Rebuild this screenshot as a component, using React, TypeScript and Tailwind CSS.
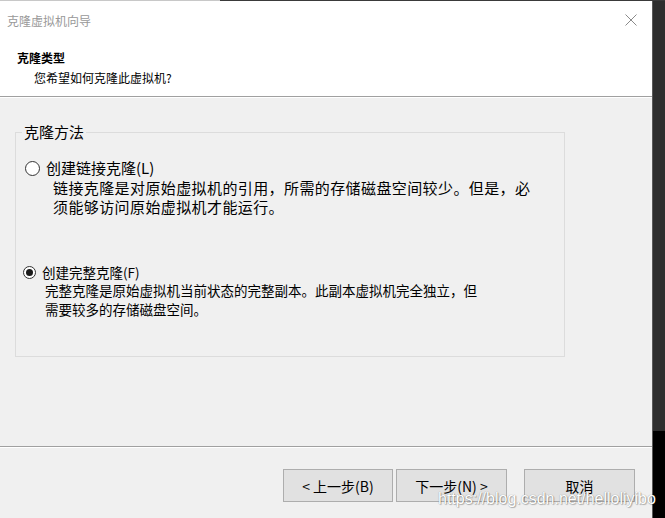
const cjk = "font-['Noto_Sans_CJK_SC','Microsoft_YaHei',sans-serif]";

function Radio({ checked, size }: { checked?: boolean; size: number }) {
  return (
    <span
      className="flex items-center justify-center rounded-full border border-[#333333] bg-white shrink-0"
      style={{ width: size, height: size }}
    >
      {checked && <span className="block w-[7px] h-[7px] rounded-full bg-[#1a1a1a]" />}
    </span>
  );
}

function Btn({ label, w }: { label: string; w: number }) {
  return (
    <button
      className="h-[33px] border border-[#adadad] bg-[#e1e1e1] text-[14px] leading-none text-black flex items-center justify-center"
      style={{ width: w }}
    >
      {label}
    </button>
  );
}

export default function App() {
  return (
    <div className={`relative w-[665px] h-[518px] overflow-hidden bg-[#f0f0f0] ${cjk}`}>
      <div className="flex h-[1px]">
        <div className="w-[220px] bg-[#c8c8c8]" />
        <div className="flex-1 bg-[#3a3a3a]" />
      </div>
      <div className="flex h-[517px]">
        {/* dialog */}
        <div className="w-[652px] flex flex-col">
          <div className="bg-white">
            <div className="h-[39px] flex items-center justify-between pl-[7px] pr-[15px]">
              <span className="text-[12px] leading-[20px] text-[#999999]">克隆虚拟机向导</span>
              <svg width="12" height="12" viewBox="0 0 12 12" className="mb-[2px]">
                <path d="M0.5 0.5 L11.5 11.5 M11.5 0.5 L0.5 11.5" stroke="#8a8a8a" strokeWidth="1" />
              </svg>
            </div>
            <div className="pt-[8px] pb-[8px] text-[12px] leading-[20px] text-black">
              <div className="pl-[17px] font-bold">克隆类型</div>
              <div className="pl-[34px]">您希望如何克隆此虚拟机?</div>
            </div>
          </div>
          <div className="h-[1px] bg-[#a0a0a0]" />
          <div className="h-[1px] bg-white" />

          {/* body */}
          <div className="h-[348px] pt-[23px] pl-[15px]">
            <fieldset className="w-[550px] h-[236px] border border-[#dcdcdc] px-0 pb-0">
              <legend className="ml-[6px] px-[2px] text-[15px] leading-[22px] text-black">克隆方法</legend>
              <div className="pt-[15px] flex flex-col">
                <div className="flex items-center h-[20px] ml-[9px] gap-[6px]">
                  <Radio size={15} />
                  <span className="text-[15px] leading-[20px] text-black">创建链接克隆(L)</span>
                </div>
                <div className="ml-[37px] text-[15px] leading-[19px] tracking-[0.4px] text-black">
                  链接克隆是对原始虚拟机的引用，所需的存储磁盘空间较少。但是，必
                  <br />
                  须能够访问原始虚拟机才能运行。
                </div>

                <div className="flex items-center h-[18px] mt-[47px] ml-[7px] gap-[6px]">
                  <Radio size={13} checked />
                  <span className="text-[13.5px] leading-[18px] text-black">创建完整克隆(F)</span>
                </div>
                <div className="ml-[29px] text-[13.5px] leading-[19px] text-black">
                  完整克隆是原始虚拟机当前状态的完整副本。此副本虚拟机完全独立，但
                  <br />
                  需要较多的存储磁盘空间。
                </div>
              </div>
            </fieldset>
          </div>

          <div className="h-[1px] bg-[#a0a0a0]" />
          <div className="h-[1px] bg-white" />

          <div className="pt-[21px] pr-[17px] flex justify-end">
            <div className="flex gap-[3px]">
              <Btn label="< 上一步(B)" w={110} />
              <Btn label="下一步(N) >" w={111} />
            </div>
            <div className="ml-[17px]">
              <Btn label="取消" w={111} />
            </div>
          </div>
        </div>

        {/* desktop edge */}
        <div className="flex-1 flex flex-col border-l border-[#5a5a5a]">
          <div className="h-[430px] bg-[#2e2e2e]" />
          <div className="flex-1 bg-black" />
        </div>
      </div>

      <div className="absolute left-[438px] top-[489px] font-['Liberation_Sans',Arial,sans-serif] text-[16px] leading-[20px] text-white [text-shadow:0_0_1px_rgba(0,0,0,0.45),1px_1px_1px_rgba(0,0,0,0.25)] pointer-events-none">
        https://blog.csdn.net/helloliyibo
      </div>
    </div>
  );
}
